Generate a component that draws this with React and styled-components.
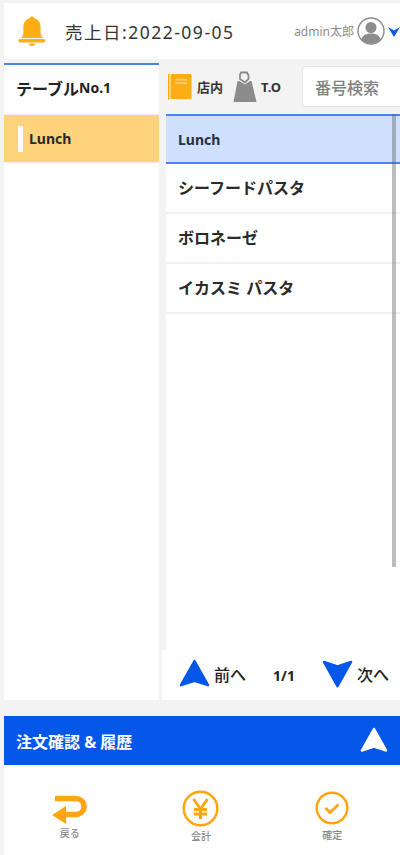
import styled, { createGlobalStyle } from "styled-components";

const Global = createGlobalStyle`
  html, body { margin: 0; padding: 0; background: #f3f3f3; }
  * { box-sizing: border-box; }
  body { font-family: "Noto Sans", "Noto Sans CJK JP", sans-serif; color: #222; }
`;

const Page = styled.div`
  width: 400px;
  height: 855px;
  padding: 3px 0 0 4px;
  display: flex;
  flex-direction: column;
  overflow: hidden;
`;
const Header = styled.header`
  height: 56px;
  background: #fff;
  display: flex;
  align-items: center;
  padding-left: 14px;
`;
const Sales = styled.div`
  margin-left: 19px;
  font-size: 17.5px;
  letter-spacing: 1.5px;
  color: #333;
  flex: 1;
  white-space: nowrap;
`;
const User = styled.div`
  font-size: 12px;
  color: #8c8c8c;
  white-space: nowrap;
  margin-right: 3px;
`;
const Avatar = styled.svg`
  width: 28px;
  height: 28px;
  flex: none;
`;
const Caret = styled.svg`
  width: 12px;
  height: 11px;
  margin-left: 3px;
  flex: none;
`;
const Body = styled.div`
  display: flex;
  height: 641px;
`;
const Side = styled.aside`
  width: 155px;
  margin-top: 4px;
  background: #fff;
  border-top: 2px solid #4d82ee;
`;
const TableName = styled.div`
  height: 50px;
  padding: 0 0 4px 12px;
  display: flex;
  align-items: center;
  font-size: 16px;
  font-weight: 700;
  color: #222;
  border-bottom: 1px solid #f0f0f0;
  small { font-size: 14px; font-weight: 700; }
`;
const Category = styled.div`
  height: 48px;
  background: #ffd27c;
  display: flex;
  align-items: center;
  padding-left: 14px;
  gap: 6px;
  font-size: 14px;
  font-weight: 700;
  color: #2a2a2a;
  border-bottom: 1px solid #f0ece4;
`;
const Mark = styled.span`
  width: 5px;
  height: 26px;
  background: #fff;
`;
const Main = styled.main`
  width: 234px;
  margin-left: 7px;
  display: flex;
  flex-direction: column;
  position: relative;
`;
const Toolbar = styled.div`
  height: 55px;
  display: flex;
  align-items: center;
  padding-left: 2px;
`;
const Kind = styled.div`
  display: flex;
  align-items: center;
  margin-right: ${(p) => p.$gap}px;
  font-size: 13px;
  font-weight: 700;
  color: #333;
`;
const Book = styled.svg`
  width: 24px;
  height: 28px;
  margin-right: 5px;
`;
const Bag = styled.svg`
  width: 24px;
  height: 32px;
  margin-right: 4px;
`;
const Search = styled.div`
  width: 110px;
  height: 41px;
  margin-right: -14px;
  flex: none;
  background: #fff;
  border: 1px solid #dfe3ea;
  border-radius: 4px;
  padding-left: 12px;
  display: flex;
  align-items: center;
  font-size: 16px;
  font-weight: 500;
  color: #808080;
  white-space: nowrap;
`;
const ListHead = styled.div`
  height: 50px;
  background: #cfe0ff;
  border-top: 2px solid #4d82ee;
  border-bottom: 2px solid #4d82ee;
  display: flex;
  align-items: center;
  padding-left: 12px;
  font-size: 14px;
  font-weight: 700;
  color: #2a2f3a;
`;
const List = styled.div`
  flex: 1;
  background: #fff;
`;
const Item = styled.div`
  height: 50px;
  display: flex;
  align-items: center;
  padding: 0 0 3px 12px;
  font-size: 16px;
  font-weight: 700;
  color: #2a2a2a;
  border-bottom: 2px solid #f0f0f0;
`;
const Scroll = styled.div`
  position: absolute;
  top: 55px;
  right: 4px;
  width: 4px;
  height: 453px;
  background: rgba(90, 90, 90, 0.4);
`;
const Pager = styled.div`
  height: 50px;
  margin-left: -4px;
  background: #fff;
  display: flex;
  align-items: center;
  padding-left: 17px;
  font-size: 16px;
  font-weight: 500;
  color: #222;
`;
const PageStep = styled.div`
  display: flex;
  align-items: center;
  gap: 4px;
  padding-bottom: 2px;
`;
const PageNo = styled.div`
  width: 76px;
  text-align: center;
  font-size: 14px;
  font-weight: 700;
`;
const Order = styled.div`
  height: 49px;
  margin-top: 16px;
  background: #0457e8;
  display: flex;
  align-items: center;
  justify-content: space-between;
  padding: 0 12px;
  color: #fff;
  font-size: 16px;
  font-weight: 700;
`;
const Footer = styled.footer`
  flex: 1;
  background: #fff;
  display: flex;
  padding-right: 2px;
`;
const Action = styled.div`
  flex: 1;
  display: flex;
  flex-direction: column;
  align-items: center;
  padding-top: ${(p) => p.$top}px;
  font-size: 10px;
  font-weight: 500;
  color: #888;
  gap: ${(p) => p.$gap}px;
`;
const ArrowIcon = styled.svg`
  width: ${(p) => p.$size}px;
  height: ${(p) => p.$size * 0.94}px;
  flex: none;
  transform: ${(p) => (p.$down ? "rotate(180deg)" : "none")};
`;

const Bell = () => (
  <svg width="28" height="30" viewBox="0 0 28 30" fill="#ffad14">
    <circle cx="14" cy="3" r="2.4" />
    <path d="M14 2c5.6 0 8.600 4 8.600 9v6.500c0 2 1.200 3.200 2.400 4.500H3c1.200-1.300 2.400-2.500 2.400-4.500V11c0-5 3-9 8.600-9z" />
    <rect x="0.500" y="23" width="27" height="3.400" rx="1.700" />
    <path d="M11 27.500h6a3 2.500 0 0 1-6 0z" />
  </svg>
);

const Arrow = ({ size = 31, fill = "#0457e8", down }) => (
  <ArrowIcon $size={size} $down={down} viewBox="0 0 32 30">
    <path
      d="M16 2L30 27 16 22.500 2 27z"
      fill={fill}
      stroke={fill}
      strokeWidth="2.500"
      strokeLinejoin="round"
    />
  </ArrowIcon>
);

const Back = () => (
  <svg width="36" height="30" viewBox="0 0 36 30" fill="none">
    <path d="M3 3.500h20c5 0 9 3 9 8s-4 8-9 8H12" stroke="#ffa514" strokeWidth="5.500" />
    <path d="M14 11v18L0 20z" fill="#ffa514" />
  </svg>
);

const Yen = () => (
  <svg width="37" height="37" viewBox="0 0 37 37" fill="none" stroke="#ffa514">
    <circle cx="18.500" cy="18.500" r="16.800" strokeWidth="2.500" />
    <path d="M11.500 9l7 10 7-10M18.500 19v10M12 19.500h13M12 24h13" strokeWidth="3" />
  </svg>
);

const Check = () => (
  <svg width="34" height="34" viewBox="0 0 34 34" fill="none" stroke="#ffa514">
    <circle cx="17" cy="17" r="15.300" strokeWidth="2.500" />
    <path d="M10.500 17l4.500 4.500 8.500-8" strokeWidth="2.800" />
  </svg>
);

const menu = ["シーフードパスタ", "ボロネーゼ", "イカスミ パスタ"];

export default function App() {
  return (
    <Page>
      <Global />
      <Header>
        <Bell />
        <Sales>売上日:2022-09-05</Sales>
        <User>admin太郎</User>
        <Avatar viewBox="0 0 28 28">
          <circle cx="14" cy="14" r="13" fill="#fff" stroke="#8c8c8c" strokeWidth="1.400" />
          <circle cx="14" cy="10.500" r="5.500" fill="#8c8c8c" />
          <path d="M4.500 22.500c1-4.500 5-6 9.500-6s8.500 1.500 9.500 6a13 13 0 0 1-19 0z" fill="#8c8c8c" />
        </Avatar>
        <Caret viewBox="0 0 12 10" preserveAspectRatio="none">
          <path d="M0 1l6 3 6-3-6 9z" fill="#0457e8" />
        </Caret>
      </Header>
      <Body>
        <Side>
          <TableName>
            テーブル<small>No.1</small>
          </TableName>
          <Category>
            <Mark />
            Lunch
          </Category>
        </Side>
        <Main>
          <Toolbar>
            <Kind $gap={10}>
              <Book viewBox="0 0 24 28">
                <path d="M0 1h1.500v25l-.7 1.500L0 26z" fill="#ffad14" />
                <rect x="2.500" y="1" width="21" height="25" rx="1" fill="#ffad14" />
                <rect x="7" y="6" width="12" height="1.500" fill="#ffd27c" />
                <rect x="7" y="9.500" width="12" height="1.500" fill="#ffd27c" />
              </Book>
              店内
            </Kind>
            <Kind $gap={21}>
              <Bag viewBox="0 0 24 32">
                <path d="M8 1.500h6l1.500 3v3.500l-3.500 3.500L7 8V4z" fill="none" stroke="#8c8c8c" strokeWidth="1.800" />
                <path d="M6 10l6 3.500 5-3.500h1.500L23.500 31H.5L4.500 10z" fill="#8c8c8c" />
              </Bag>
              T.O
            </Kind>
            <Search>番号検索</Search>
          </Toolbar>
          <ListHead>Lunch</ListHead>
          <List>
            {menu.map((name) => (
              <Item key={name}>{name}</Item>
            ))}
          </List>
          <Scroll />
          <Pager>
            <PageStep>
              <Arrow />
              前へ
            </PageStep>
            <PageNo>1/1</PageNo>
            <PageStep>
              <Arrow down />
              次へ
            </PageStep>
          </Pager>
        </Main>
      </Body>
      <Order>
        注文確認 & 履歴
        <Arrow size={28} fill="#fff" />
      </Order>
      <Footer>
        <Action $top={30} $gap={0}>
          <Back />
          戻る
        </Action>
        <Action $top={25} $gap={1}>
          <Yen />
          会計
        </Action>
        <Action $top={26} $gap={2}>
          <Check />
          確定
        </Action>
      </Footer>
    </Page>
  );
}
